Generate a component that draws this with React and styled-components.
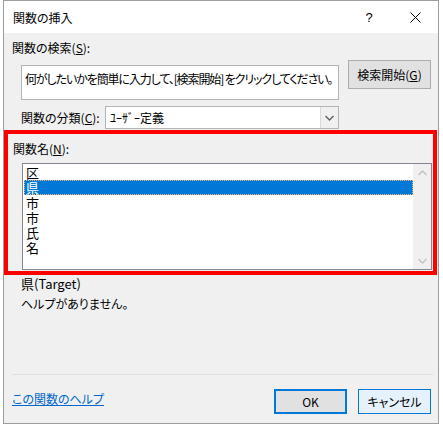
import React from 'react';
import styled, { createGlobalStyle } from 'styled-components';

const GlobalStyle = createGlobalStyle`
  body {
    margin: 0;
    background: #ffffff;
    font-family: "Noto Sans CJK JP", "Noto Sans", sans-serif;
    font-feature-settings: "palt";
    color: #000;
  }
`;

const Window = styled.div`
  margin-left: 3px;
  width: 436px;
  height: 424px;
  box-sizing: border-box;
  border: 1px solid #9d9d9d;
  background: #f0f0f0;
  display: flex;
  flex-direction: column;
`;

const TitleBar = styled.div`
  height: 32px;
  background: #ffffff;
  display: flex;
  align-items: center;
  padding-left: 9px;
  flex-shrink: 0;
`;

const Title = styled.div`
  flex: 1;
  font-size: 12px;
`;

const TitleButton = styled.div`
  width: 46px;
  height: 32px;
  display: flex;
  align-items: center;
  justify-content: center;
  font-size: 13px;
  font-family: "Liberation Sans", sans-serif;
`;

const Label = styled.div`
  height: ${(p) => p.$h || 27}px;
  box-sizing: border-box;
  padding-top: 7px;
  padding-left: ${(p) => p.$indent || 8}px;
  font-size: 12px;
  line-height: 16px;
`;

const Key = styled.span`
  text-decoration: underline;
`;

const SearchRow = styled.div`
  display: flex;
  align-items: flex-start;
  padding-left: 17px;
  gap: 9px;
  height: 40px;
`;

const SearchBox = styled.div`
  width: 318px;
  height: 35px;
  margin-top: 5px;
  box-sizing: border-box;
  border: 1px solid #b4b4b4;
  background: #fff;
  padding: 5px 0 0 3px;
  font-size: 12px;
  line-height: 16px;
  letter-spacing: -1.1px;
  white-space: nowrap;
  overflow: hidden;
`;

const Button = styled.div`
  width: ${(p) => p.$w || 73}px;
  height: ${(p) => p.$h || 25}px;
  box-sizing: border-box;
  border: ${(p) => (p.$default ? '2px solid #0078d7' : p.$hot ? '1px solid #0078d7' : '1px solid #adadad')};
  background: ${(p) => (p.$hot ? '#e5f1fb' : '#e1e1e1')};
  display: flex;
  align-items: center;
  justify-content: center;
  font-size: 12px;
`;

const CategoryRow = styled.div`
  margin-top: 6px;
  height: 23px;
  display: flex;
  align-items: center;
  padding-left: 17px;
`;

const CategoryLabel = styled.div`
  width: 84px;
  font-size: 12px;
`;

const Select = styled.div`
  width: 234px;
  height: 23px;
  box-sizing: border-box;
  border: 1px solid #b4b4b4;
  background: #fff;
  display: flex;
  align-items: center;
`;

const SelectValue = styled.div`
  flex: 1;
  padding-left: 4px;
  font-size: 12px;
`;

const SelectArrow = styled.div`
  width: 17px;
  height: 100%;
  border-left: 1px solid #d9d9d9;
  background: #f0f0f0;
  display: flex;
  align-items: center;
  justify-content: center;
`;

const Section = styled.div`
  margin-top: 1px;
  margin-right: 1px;
  height: 145px;
  box-sizing: border-box;
  border: 4px solid #ff0000;
  display: flex;
  flex-direction: column;
`;

const ListBox = styled.div`
  margin: 0 1px 0 14px;
  height: 107px;
  box-sizing: border-box;
  border: 1px solid #828790;
  background: #fff;
  display: flex;
`;

const Items = styled.div`
  flex: 1;
  padding: 1px 0 0 1px;
`;

const Item = styled.div`
  height: 15px;
  line-height: 15px;
  padding-left: 2px;
  font-size: 13px;
  box-sizing: border-box;
  background: ${(p) => (p.$selected ? '#0078d7' : 'transparent')};
  color: ${(p) => (p.$selected ? '#fff' : '#000')};
  outline: ${(p) => (p.$selected ? '1px dotted #f4b97a' : 'none')};
  outline-offset: -1px;
`;

const ScrollBar = styled.div`
  width: 18px;
  background: #f0f0f0;
  display: flex;
  flex-direction: column;
  justify-content: space-between;
`;

const ScrollArrow = styled.div`
  height: 17px;
  display: flex;
  align-items: center;
  justify-content: center;
`;

const Detail = styled.div`
  padding-left: 17px;
  font-size: ${(p) => p.$size || 12}px;
  line-height: 18px;
  margin-top: ${(p) => p.$top || 0}px;
`;

const Spacer = styled.div`
  flex: 1;
`;

const Separator = styled.div`
  height: 1px;
  margin: 0 5px 0 8px;
  background: #dfdfdf;
`;

const Footer = styled.div`
  height: 48px;
  display: flex;
  align-items: flex-start;
  padding: 14px 7px 0 8px;
  box-sizing: border-box;
  gap: 11px;
`;

const HelpLink = styled.a`
  flex: 1;
  margin-top: 1px;
  font-size: 12px;
  color: #0066cc;
  text-decoration: underline;
`;

const Chevron = ({ up, color = '#c2c2c2' }) => (
  <svg width="9" height="6" viewBox="0 0 9 6">
    <path
      d={up ? 'M0.5 5 L4.5 1 L8.5 5' : 'M0.5 1 L4.5 5 L8.5 1'}
      fill="none"
      stroke={color}
      strokeWidth="1.4"
    />
  </svg>
);

const names = ['区', '県', '市', '市', '氏', '名'];

export default function App() {
  return (
    <>
      <GlobalStyle />
      <Window>
        <TitleBar>
          <Title>関数の挿入</Title>
          <TitleButton>?</TitleButton>
          <TitleButton>
            <svg width="11" height="11" viewBox="0 0 11 11">
              <path d="M0.5 0.5 L10.5 10.5 M10.5 0.5 L0.5 10.5" stroke="#000" strokeWidth="1" />
            </svg>
          </TitleButton>
        </TitleBar>

        <Label>
          関数の検索(<Key>S</Key>):
        </Label>
        <SearchRow>
          <SearchBox>何がしたいかを簡単に入力して、[検索開始] をクリックしてください。</SearchBox>
          <Button $w={83} $h={29}>
            検索開始(<Key>G</Key>)
          </Button>
        </SearchRow>

        <CategoryRow>
          <CategoryLabel>
            関数の分類(<Key>C</Key>):
          </CategoryLabel>
          <Select>
            <SelectValue>ﾕｰｻﾞｰ定義</SelectValue>
            <SelectArrow>
              <Chevron color="#606060" />
            </SelectArrow>
          </Select>
        </CategoryRow>

        <Section>
          <Label $h={29} $indent={5}>
            関数名(<Key>N</Key>):
          </Label>
          <ListBox>
            <Items>
              {names.map((n, i) => (
                <Item key={i} $selected={i === 1}>
                  {n}
                </Item>
              ))}
            </Items>
            <ScrollBar>
              <ScrollArrow>
                <Chevron up />
              </ScrollArrow>
              <ScrollArrow>
                <Chevron />
              </ScrollArrow>
            </ScrollBar>
          </ListBox>
        </Section>

        <Detail $size={13}>県(Target)</Detail>
        <Detail $top={2}>ヘルプがありません。</Detail>

        <Spacer />
        <Separator />
        <Footer>
          <HelpLink>この関数のヘルプ</HelpLink>
          <Button $default>OK</Button>
          <Button $hot>キャンセル</Button>
        </Footer>
      </Window>
    </>
  );
}
